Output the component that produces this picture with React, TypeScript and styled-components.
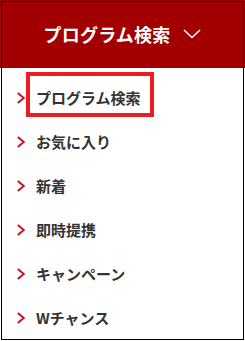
import { createGlobalStyle, styled } from "styled-components";

const GlobalStyle = createGlobalStyle`
    html, body {
        margin: 0;
        padding: 0;
        background: #fff;
    }
    body {
        font-family: "Noto Sans CJK JP", "Noto Sans", sans-serif;
    }
`;

const Frame = styled.div`
    position: relative;
    width: 245px;
    height: 341px;
    box-sizing: border-box;
    overflow: hidden;
    &::after {
        content: "";
        position: absolute;
        inset: 1px;
        border: 1px solid #000;
        pointer-events: none;
    }
`;

const Header = styled.div`
    height: 68px;
    background-color: #a20000;
    display: flex;
    align-items: center;
    justify-content: center;
    gap: 13px;
    color: #fff;
`;

const Title = styled.span`
    font-size: 18px;
    font-weight: 700;
    line-height: 22px;
    letter-spacing: 0.2px;
`;

const Menu = styled.ul`
    list-style: none;
    margin: 0;
    padding: 8px 0 0 16px;
`;

const Item = styled.li`
    height: 44px;
    display: flex;
    align-items: center;
    gap: 10px;
    color: #333;
    font-size: 15px;
    font-weight: 700;
`;

const Label = styled.span<{ $active?: boolean }>`
    position: relative;
    line-height: 22px;
    ${(p) =>
        p.$active &&
        `
        &::after {
            content: "";
            position: absolute;
            left: -10px;
            right: -13px;
            top: -15px;
            bottom: -8px;
            border: 4px solid #ec1c24;
        }
    `}
`;

const Chevron = () => (
    <svg width="10" height="12" viewBox="0 0 10 12" fill="none">
        <polyline points="1.8,1 7.8,6 1.8,11" stroke="#c1121b" strokeWidth="1.9" />
    </svg>
);

const items = ["プログラム検索", "お気に入り", "新着", "即時提携", "キャンペーン", "Wチャンス"];

export default function App() {
    return (
        <>
            <GlobalStyle />
            <Frame>
                <Header>
                    <Title>プログラム検索</Title>
                    <svg width="18" height="10" viewBox="0 0 18 10" fill="none">
                        <polyline points="1,1 9,8.5 17,1" stroke="#fff" strokeWidth="1.5" />
                    </svg>
                </Header>
                <Menu>
                    {items.map((t, i) => (
                        <Item key={t}>
                            <Chevron />
                            <Label $active={i === 0}>{t}</Label>
                        </Item>
                    ))}
                </Menu>
            </Frame>
        </>
    );
}
